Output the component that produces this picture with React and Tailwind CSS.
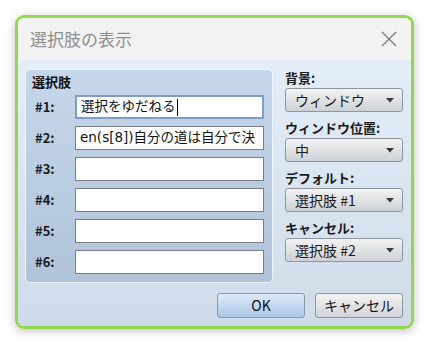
import React from 'react';

const font = { fontFamily: '"Noto Sans CJK JP", "Noto Sans", sans-serif' };
const inputFont = { fontFamily: '"DejaVu Sans", "Noto Sans CJK JP", sans-serif' };

const Arrow = () => (
  <svg width="8" height="5" viewBox="0 0 8 5" className="shrink-0">
    <path d="M0 0h8L4 4.5z" fill="#3b3b3b" />
  </svg>
);

const Select = ({ value }) => (
  <div className="flex items-center justify-between h-[24px] px-[9px] pr-[8px] rounded-[3px] border border-[#8f959c] bg-gradient-to-b from-[#f3f3f3] to-[#cdd1d6] text-[14px] text-[#1a1a1a] leading-none">
    <span>{value}</span>
    <Arrow />
  </div>
);

const Field = ({ label, value, focused }) => (
  <div className="flex items-center h-[24px]">
    <span className="w-[43px] pl-[3px] text-[13px] font-bold text-[#1a1a1a]">{label}</span>
    <div
      className={`flex items-center w-[189px] h-[24px] px-[4px] bg-white overflow-hidden whitespace-nowrap text-[13.5px] text-[#111] leading-none ${
        focused ? 'border-2 border-[#7f9dc6]' : 'border border-[#7a7e84]'
      }`}
      style={inputFont}
    >
      {value}
      {focused && <span className="inline-block w-[1px] h-[17px] bg-black ml-[1px]" />}
    </div>
  </div>
);

export default function App() {
  const fields = [
    { label: '#1:', value: '選択をゆだねる', focused: true },
    { label: '#2:', value: 'en(s[8])自分の道は自分で決' },
    { label: '#3:', value: '' },
    { label: '#4:', value: '' },
    { label: '#5:', value: '' },
    { label: '#6:', value: '' },
  ];
  const selects = [
    { label: '背景:', value: 'ウィンドウ' },
    { label: 'ウィンドウ位置:', value: '中' },
    { label: 'デフォルト:', value: '選択肢 #1' },
    { label: 'キャンセル:', value: '選択肢 #2' },
  ];

  return (
    <div className="w-[429px] h-[344px] bg-white p-[15px]" style={font}>
      <div className="flex flex-col w-[399px] h-[314px] rounded-[9px] border-[3px] border-[#94d64d] overflow-hidden shadow-[0_2px_10px_rgba(0,0,0,0.25)]">
        {/* タイトルバー */}
        <div className="flex items-center justify-between h-[42px] pl-[12px] pr-[14px] bg-[#f2f2f2]">
          <span className="text-[17px] text-[#8f8f8f]">選択肢の表示</span>
          <svg width="16" height="16" viewBox="0 0 16 16">
            <path d="M1 1L15 15M15 1L1 15" stroke="#7a7a7a" strokeWidth="1.3" />
          </svg>
        </div>

        {/* 本体 */}
        <div className="flex-1 flex flex-col pl-[7px] pr-[8px] pt-[9px] pb-[8px] bg-gradient-to-b from-[#e4eefb] to-[#cfdbe8]">
          <div className="flex gap-[12px]">
            <div className="w-[248px] h-[214px] rounded-[5px] border border-[#eef4fb] bg-gradient-to-b from-[#c6d7eb] to-[#b0c3d8] pl-[6px] pt-[2px]">
              <div className="h-[20px] text-[13px] font-bold text-[#111] leading-[20px]">選択肢</div>
              <div className="flex flex-col gap-[7px] mt-[3px]">
                {fields.map((f) => (
                  <Field key={f.label} {...f} />
                ))}
              </div>
            </div>

            <div className="flex flex-col w-[118px] pt-[1px]">
              {selects.map((s) => (
                <div key={s.label} className="flex flex-col gap-[2px] mb-[8px]">
                  <span className="h-[16px] text-[13px] font-bold text-[#1a1a1a] leading-[16px]">{s.label}</span>
                  <Select value={s.value} />
                </div>
              ))}
            </div>
          </div>

          <div className="flex justify-end gap-[10px] mt-[10px]">
            <button className="w-[88px] h-[25px] rounded-[3px] border border-[#8a97a6] bg-gradient-to-b from-[#dceaf8] to-[#a9c7e6] text-[14px] text-[#111]">
              OK
            </button>
            <button className="w-[88px] h-[25px] rounded-[3px] border border-[#8f959c] bg-gradient-to-b from-[#f3f3f3] to-[#d2d4d7] text-[14px] text-[#111]">
              キャンセル
            </button>
          </div>
        </div>
      </div>
    </div>
  );
}
